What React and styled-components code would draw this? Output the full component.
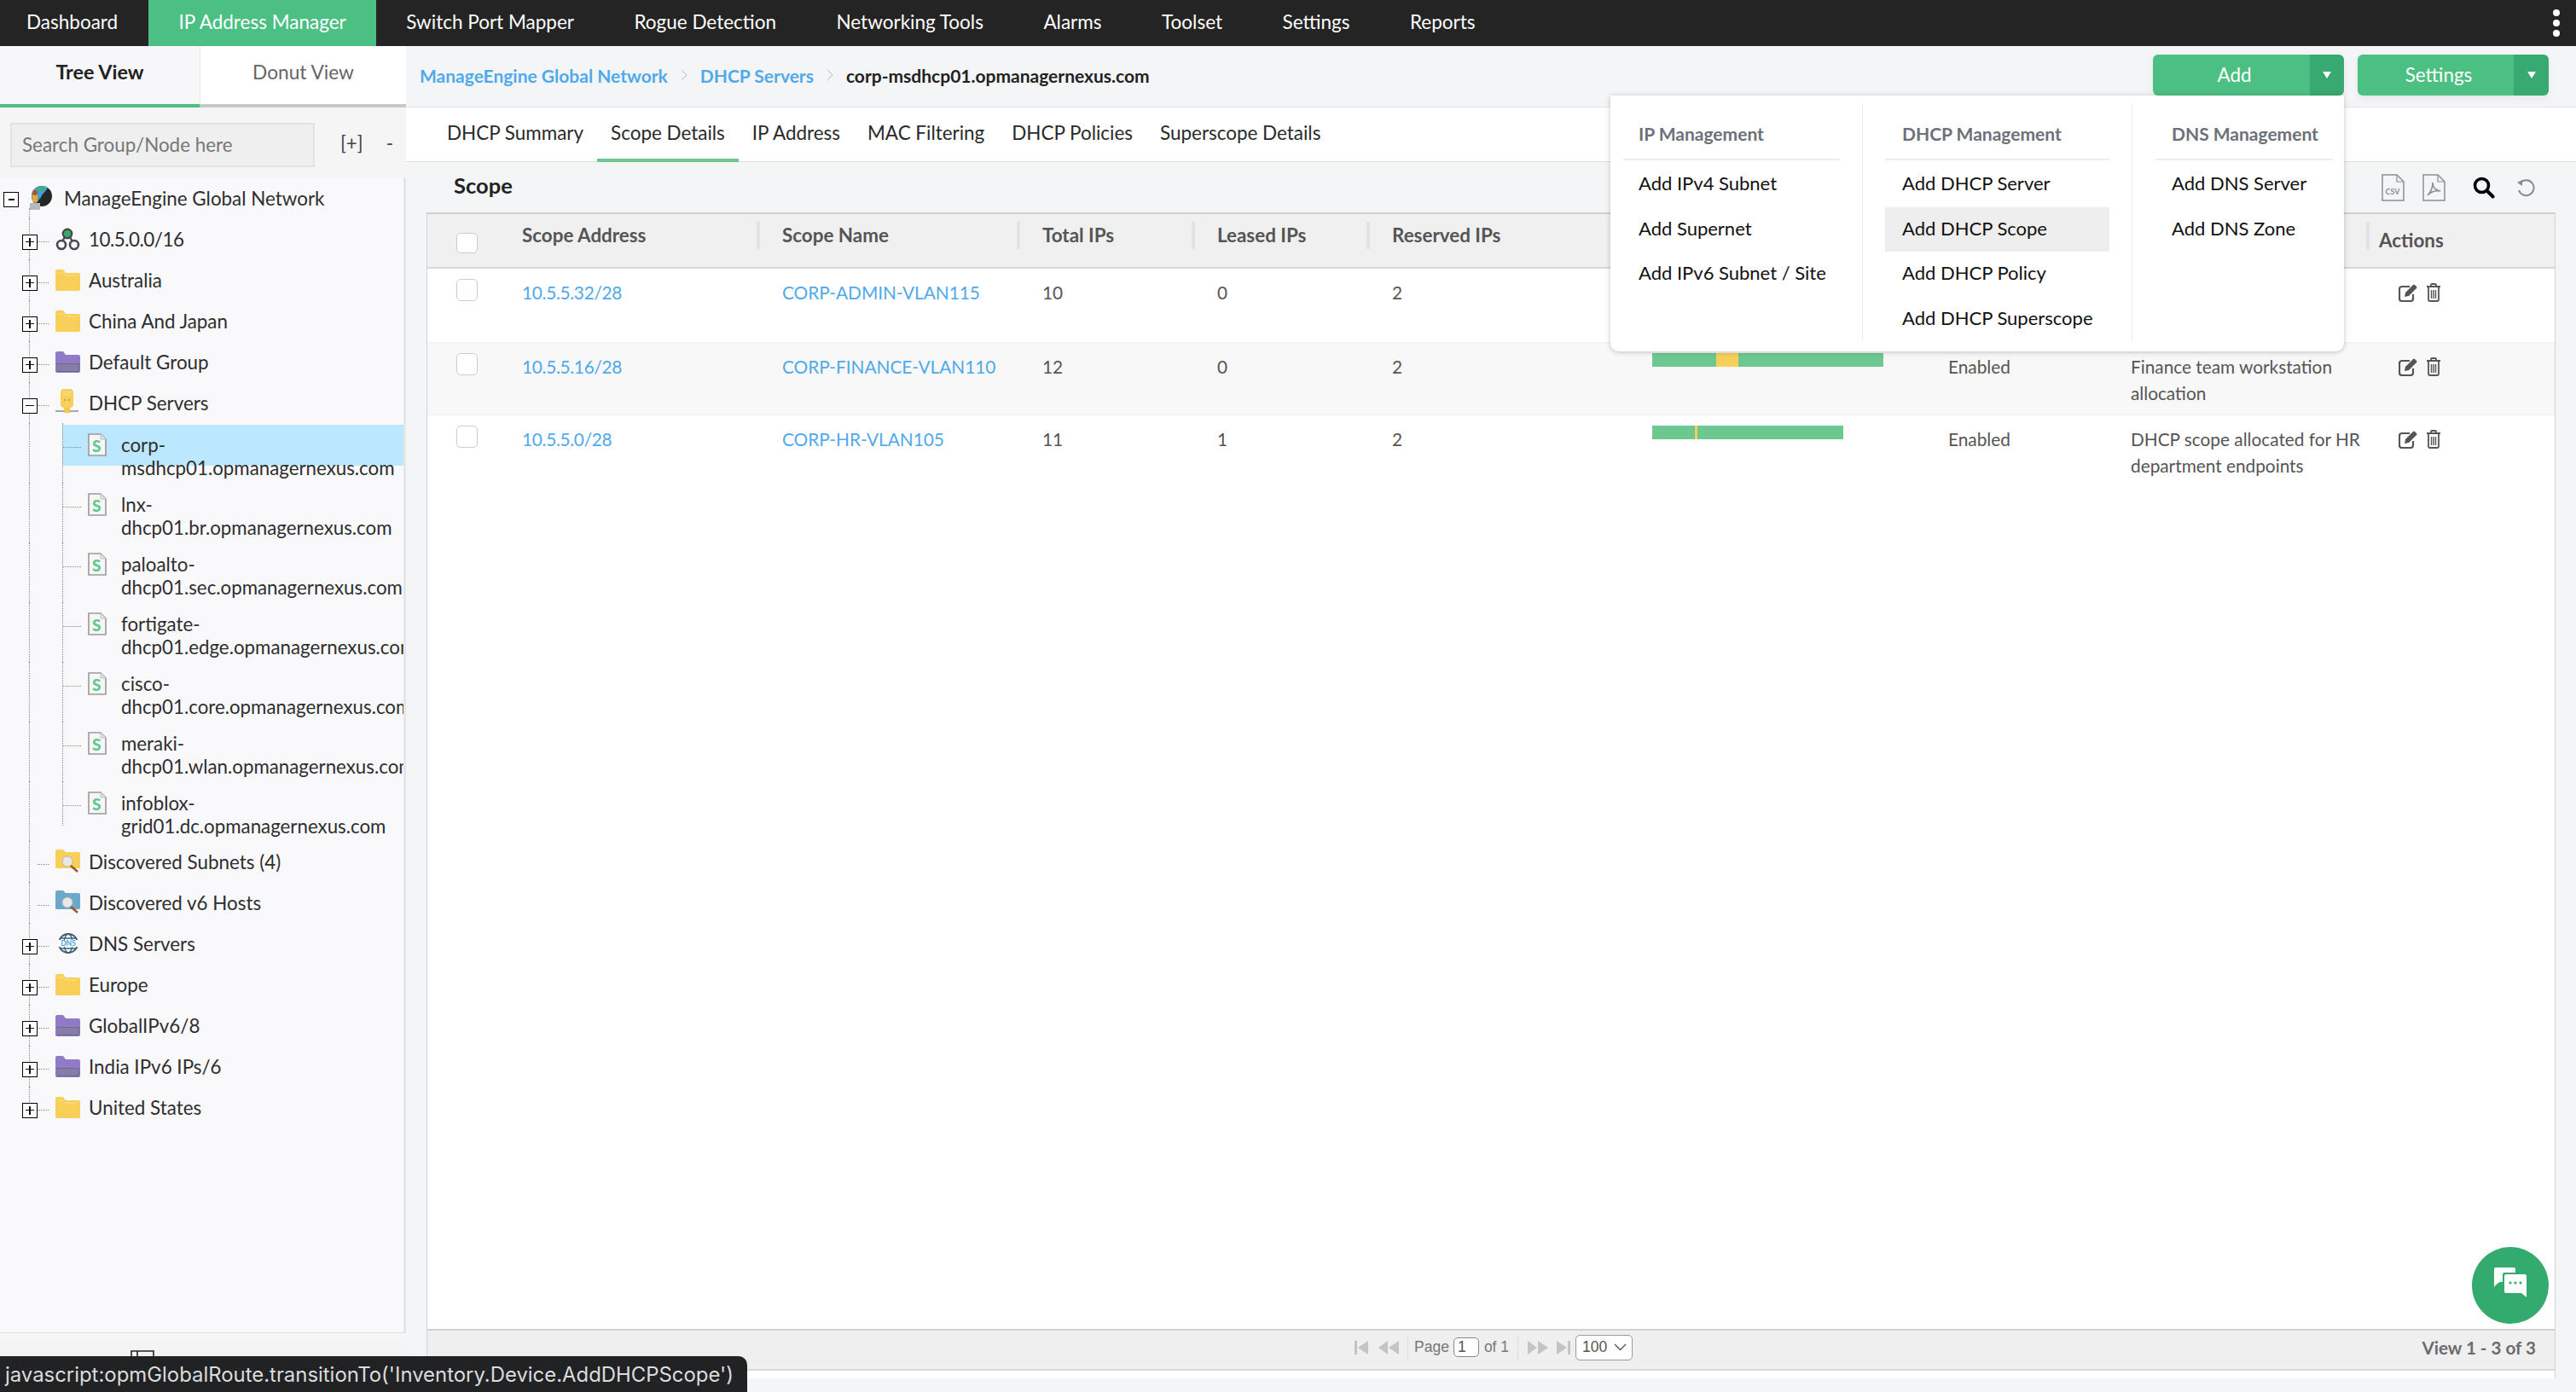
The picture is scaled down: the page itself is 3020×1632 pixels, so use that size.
import React from "react";
import styled, { createGlobalStyle, css } from "styled-components";

const Global = createGlobalStyle`
  html, body { margin: 0; padding: 0; background: #f4f5f7; }
  * { box-sizing: border-box; }
  body { font-family: Lato, "Open Sans", sans-serif; color: #2b2b2b; }
`;

const Page = styled.div`
  position: relative; width: 3020px; height: 1632px; overflow: hidden;
  display: flex; flex-direction: column; background: #f4f5f7;
`;

/* ---------- top nav ---------- */
const TopNav = styled.nav`
  display: flex; align-items: stretch; height: 54px; background: #242424; flex: none;
`;
const NavItem = styled.a`
  display: flex; align-items: center; color: #fff; font-size: 22.5px;
  padding: 0 35.25px 3px; white-space: nowrap;
  background: ${p => (p.$active ? "#4cbf83" : "transparent")};
  &:first-child { padding-left: 31px; padding-right: 36px; }
`;
const Kebab = styled.div`
  margin-left: auto; width: 46px; display: flex; flex-direction: column;
  align-items: center; justify-content: center; gap: 4px;
  & > i { width: 8px; height: 8px; background: #fff; border-radius: 50%; display: block; }
`;

const Body = styled.div`display: flex; flex: 1; min-height: 0;`;

/* ---------- sidebar ---------- */
const Sidebar = styled.aside`
  width: 476px; flex: none; display: flex; flex-direction: column; background: #f5f5f5;
`;
const ViewTabs = styled.div`display: flex; height: 72px; flex: none; background: #fff;`;
const ViewTab = styled.div`
  flex: ${p => (p.$active ? "0 0 235px" : "1")};
  display: flex; align-items: center; justify-content: center; padding-bottom: 8px;
  font-size: ${p => (p.$active ? "23.4px" : "22.7px")};
  font-weight: ${p => (p.$active ? 700 : 400)};
  color: ${p => (p.$active ? "#222" : "#666")};
  background: ${p => (p.$active ? "#f7f7f9" : "#fff")};
  border-bottom: 4px solid ${p => (p.$active ? "#4cbf83" : "#c8c8c8")};
  border-right: ${p => (p.$active ? "1px solid #e4e4e4" : "none")};
`;
const SearchRow = styled.div`
  height: 82px; flex: none; display: flex; align-items: flex-start;
  padding: 18px 0 0 12px; background: #f5f5f5;
`;
const SearchInput = styled.input`
  width: 357px; height: 52px; border: 2px solid #e2e2e2; background: #efefef;
  font: 22.4px Lato, sans-serif; padding: 0 12px 2px; outline: none;
  &::placeholder { color: #777; opacity: 1; }
`;
const TreeBtn = styled.span`
  font-size: 22.4px; color: #444; line-height: 48px; margin-left: ${p => p.$ml}px;
`;
const Tree = styled.div`
  height: 1355px; flex: none; background: #f9f9fc; overflow: hidden;
  border-right: 3px solid #e6e6e9; border-bottom: 1px solid #ddd;
`;
const Row = styled.div`
  position: relative; display: flex; height: 48px; align-items: center; font-size: 22.4px; color: #2e2e2e;
  padding-left: 26px; white-space: nowrap;
  &::before {
    content: ""; position: absolute; left: 34px; top: 0; bottom: ${p => (p.$last ? "22px" : "0")};
    border-left: 1px dotted #888;
  }
`;
const RootRow = styled(Row)`
  padding-left: 4px;
  &::before { top: 36px; bottom: 0; }
`;
const TreeLabel = styled.span`
  letter-spacing: ${p => (p.$tight ? "-0.5px" : "0")};
`;
const Expander = styled.span`
  position: relative; z-index: 1; width: 18px; height: 18px; flex: none; margin-top: 7px;
  border: 1.5px solid #000; background: #fff;
  display: flex; align-items: center; justify-content: center;
  &::before { content: ""; width: 10px; height: 1.5px; background: #111; position: absolute; }
  ${p => !p.$open && css`
    &::after { content: ""; width: 1.5px; height: 10px; background: #111; position: absolute; }
  `}
`;
const RootExpander = styled(Expander)`
  margin-top: 4px;
  &::before { width: 7px; }
`;
const Dash = styled.span`
  flex: none; width: 13px; height: 0; margin-top: 7px; margin-right: 8px;
  border-top: 1px dotted #888;
`;
const NoBox = styled.span`width: 8px; flex: none; margin-left: 10px;`;
const IconSlot = styled.span`
  width: 29px; flex: none; display: flex; align-items: center; justify-content: center; margin-right: 10px;
`;
const RootSlot = styled(IconSlot)`width: 30px; margin-left: 11px; margin-right: 12px;`;
const ChildRow = styled.div`
  position: relative; display: flex; height: 70px; padding: 12px 0 0 74px; font-size: 22.3px; line-height: 27px; color: #2e2e2e;
  ${p => p.$selected && css`
    background: linear-gradient(#bbe7ff, #bbe7ff) no-repeat 73px 2px / 100% 48px;
  `}
  &::before { content: ""; position: absolute; left: 34px; top: 0; bottom: 0; border-left: 1px dotted #888; }
  &::after {
    content: ""; position: absolute; left: 73px; top: 0; bottom: ${p => (p.$last ? "18px" : "0")};
    border-left: 1px dotted #888;
  }
`;
const ChildDash = styled.span`
  flex: none; width: 21px; height: 0; margin-top: 16px; margin-right: 8px; border-top: 1px dotted #888;
`;
const ChildIcon = styled.span`flex: none; width: 22px; margin-right: 17px; display: flex;`;
const ChildText = styled.span`width: 400px; flex: none; padding-right: 67px;`;

const SideFoot = styled.div`
  flex: 1; padding: 20px 0 0 153px; background: linear-gradient(#f6f6f6, #ececec);
  & > svg { display: block; }
`;

/* ---------- main ---------- */
const Main = styled.main`flex: 1; min-width: 0; display: flex; flex-direction: column; background: #f4f5f7;`;
const CrumbBar = styled.div`
  height: 72px; flex: none; display: flex; align-items: center; padding: 0 32px 3px 16px; gap: 15px; font-size: 21px; border-bottom: 1px solid #e6e6e6;
`;
const Crumb = styled.a`
  font-weight: 700; color: ${p => (p.$current ? "#222" : "#4fa9ea")}; white-space: nowrap;
`;
const SplitBtn = styled.div`
  width: 224px; height: 48px; display: flex; border-radius: 6px; overflow: hidden;
  margin-left: ${p => p.$ml}; color: #fff; font-size: 22.4px; box-shadow: 0 4px 10px rgba(0,0,0,.06);
`;
const SplitLabel = styled.span`
  flex: 1; background: #4cbf83; display: flex; align-items: center; justify-content: center; padding: 0 0 2px 7px;
`;
const SplitCaret = styled.span`
  width: ${p => p.$w}px; flex: none; background: #38a970; display: flex; align-items: center; justify-content: center;
  &::before { content: ""; border-left: 5px solid transparent; border-right: 5px solid transparent; border-top: 8px solid #fff; }
`;
const SubTabs = styled.div`
  height: 64px; flex: none; background: #fff; display: flex; padding-left: 32px; border-bottom: 1px solid #dedede;
`;
const SubTab = styled.a`
  display: flex; align-items: center; padding: 0 16px 2px; font-size: 22.45px; color: #2a2a2a; white-space: nowrap;
  height: 64px;
  border-bottom: 4px solid ${p => (p.$active ? "#6cc88f" : "transparent")};
`;
const ScopeBar = styled.div`
  height: 59px; flex: none; display: flex; align-items: center; padding: 0 48px 0 56px;
`;
const ScopeTitle = styled.h2`font-size: 25.5px; font-weight: 700; margin: 0 0 5px; color: #222;`;
const ToolIcons = styled.div`
  margin-left: auto; display: flex; align-items: center; height: 100%;
  & > svg { display: block; }
`;
const ToolGap = styled.span`width: ${p => p.$w}px; flex: none;`;

const TableWrap = styled.section`
  margin: 0 24px 16px 24px; flex: 1; min-height: 0; background: #fff; display: flex; flex-direction: column;
  border-left: 1px solid #d4d4d4; border-right: 1px solid #d4d4d4; border-top: 2px solid #d0d0d0;
`;
const cols = "111px 305px 305px 205px 205px 305px 347px 214px 291px 1fr";
const HeadRow = styled.div`
  display: grid; grid-template-columns: ${cols}; height: 64px; flex: none; background: #f0f0f0; border-bottom: 2px solid #d6d6d6;
`;
const HeadCell = styled.div`
  position: relative; font-size: 22.4px; font-weight: 700; color: #555; padding-top: ${p => (p.$low ? "17px" : "11px")};
  white-space: nowrap;
  &::after {
    content: ""; display: ${p => (p.$sep ? "block" : "none")}; position: absolute; right: 26px; top: 9px;
    width: 4px; height: 32px; background: #e2e2e2;
  }
`;
const ActionsHead = styled(HeadCell)`
  &::before { content: ""; position: absolute; left: -15px; top: 9px; width: 4px; height: 32px; background: #e2e2e2; }
`;
const DataRow = styled.div`
  display: grid; grid-template-columns: ${cols}; height: 86px; flex: none;
  background: ${p => (p.$alt ? "#f8f8f8" : "#fff")};
  border-top: ${p => (p.$alt ? "1px solid #f1f1f1" : "none")};
  border-bottom: ${p => (p.$alt ? "1px solid #f1f1f1" : "none")};
  font-size: 20.8px; line-height: 31px; color: #555;
`;
const Cell = styled.div`padding-top: 12px; padding-right: 12px;`;
const LinkCell = styled(Cell)`
  color: #4fa9ea; white-space: nowrap;
  letter-spacing: ${p => (p.$tight ? "-0.3px" : "0")};
`;
const CheckCell = styled.div`padding: ${p => (p.$head ? "22px" : "12px")} 0 0 34px;`;
const Check = styled.span`
  display: block; width: 25px; height: ${p => p.$h}px; background: #fff; border: 1px solid #ccc; border-radius: 5px;
`;
const Bar = styled.div`
  display: flex; height: 16px; margin-top: 12px; width: ${p => p.$w}px; background: #6cc88f;
`;
const BarSeg = styled.span`
  display: block; margin-left: ${p => p.$at}px; width: ${p => p.$w}px; background: #f6cf58;
`;
const ActionIcons = styled.div`display: flex; gap: 8px; padding: 17px 0 0 23px; & > svg { display: block; }`;
const Filler = styled.div`flex: 1;`;
const Pager = styled.div`
  height: 49px; flex: none; margin-bottom: 9px; background: #efefef; border-top: 2px solid #d2d2d2; border-bottom: 2px solid #d8d8d8;
  display: flex; align-items: center; padding: 0 22px 6px 1086px; font-family: "Liberation Sans", Arial, sans-serif;
  font-size: 17.5px; color: #777;
`;
const PagerIcon = styled.span`display: flex; margin-right: ${p => p.$mr || 0}px; & > svg { display: block; }`;
const PagerSep = styled.span`width: 1px; height: 32px; background: #dedede; margin: 0 ${p => p.$r}px 0 ${p => p.$l}px;`;
const PageInput = styled.span`
  width: 30px; height: 23px; margin: 0 6px 0 5px; background: #fff; border: 1px solid #888; border-radius: 5px;
  display: flex; align-items: center; padding-left: 4px; color: #555;
`;
const PageSelect = styled.span`
  width: 67px; height: 30px; margin-left: 5px; background: #fff; border: 1px solid #999; border-radius: 5px;
  display: flex; align-items: center; justify-content: space-between; padding: 0 6px 0 7px; color: #555;
  & > svg { display: block; }
`;
const ViewCount = styled.span`
  margin-left: auto; font-family: Lato, sans-serif; font-weight: 700; font-size: 20.6px; color: #6b6b70;
`;

/* ---------- dropdown ---------- */
const Menu = styled.div`
  position: absolute; left: 1888px; top: 112px; width: 860px; height: 300px; z-index: 5;
  background: #fff; border-radius: 0 0 10px 10px; box-shadow: 0 1px 6px rgba(0,0,0,.22);
  display: grid; grid-template-columns: 296px 316px 1fr; padding: 11px 0 13px;
`;
const MenuCol = styled.div`
  padding: 0 ${p => p.$pr}px 0 ${p => p.$pl}px;
  border-right: ${p => (p.$div ? "1px solid #ececec" : "none")};
`;
const MenuHead = styled.div`
  height: 65px; display: flex; align-items: center; padding: 4px 0 0 ${p => p.$il || 18}px; font-size: 21px; font-weight: 700; color: #6b7079; border-bottom: 2px solid #eee; margin-bottom: 2px;
`;
const MenuItem = styled.div`
  height: 52.5px; display: flex; align-items: center; padding: 0 0 3px ${p => p.$il || 18}px; font-size: 22px; color: #111; white-space: nowrap;
  background: ${p => (p.$hot ? "#eeeeee" : "transparent")};
`;

const Tip = styled.div`
  position: absolute; left: 0; bottom: 0; height: 42px; width: 876px; z-index: 6; background: #202224;
  border-radius: 0 10px 0 0; color: #dcdcdc; font-family: Inter, Roboto, sans-serif; font-size: 23.9px;
  display: flex; align-items: center; padding-left: 6px; white-space: nowrap;
`;
const Fab = styled.div`
  position: absolute; left: 2898px; top: 1462px; width: 90px; height: 90px; z-index: 4; border-radius: 50%; background: #33ab6f;
  & > svg { display: block; }
`;

/* ---------- icons ---------- */
const Folder = ({ color = "#f8cf58" }) => (
  <svg width="29" height="25" viewBox="0 0 29 25">
    <path d="M0 2q0-2 2-2h7l3 4h15q2 0 2 2v17q0 2-2 2H2q-2 0-2-2z" fill={color} />
    <path d="M2 4h7l2 3h16" stroke="#fff" strokeWidth="1" strokeDasharray="1 1.4" fill="none" opacity=".8" />
  </svg>
);
const PurpleFolder = () => (
  <svg width="29" height="25" viewBox="0 0 29 25">
    <path d="M0 2q0-2 2-2h7l3 4h15q2 0 2 2v17q0 2-2 2H2q-2 0-2-2z" fill="#917ac8" />
    <path d="M1 14h27v9q0 1-1 1H2q-1 0-1-1z" fill="#6f6a84" />
    <path d="M2 15v8M4 15v8M6 15v8M8 15v8M10 15v8M12 15v8M14 15v8M16 15v8M18 15v8M20 15v8M22 15v8M24 15v8M26 15v8" stroke="#a99adf" strokeWidth=".8" />
  </svg>
);
const Globe = () => (
  <svg width="29" height="29" viewBox="0 0 29 29">
    <circle cx="15" cy="12" r="12" fill="#262626" />
    <path d="M15 0a12 12 0 0 0-12 12c0 4 2 7 5 9 2-4 6-6 7-10 2-3 5-5 7-9a12 12 0 0 0-7-2z" fill="#3f9fd0" />
    <path d="M10 2c3-1 7-1 9 1-2 3-6 3-8 2z" fill="#4fb05a" />
    <rect x="4" y="10" width="6" height="9" fill="#e9a93a" />
    <circle cx="7" cy="8" r="3" fill="#a5582a" />
    <rect x="1" y="20" width="12" height="8" fill="#b8b8b8" />
  </svg>
);
const Network = () => (
  <svg width="29" height="27" viewBox="0 0 29 27">
    <circle cx="14" cy="7" r="5.2" fill="#33ab6f" stroke="#4a4a4a" strokeWidth="2.4" />
    <circle cx="7" cy="20" r="5" fill="none" stroke="#4a4a4a" strokeWidth="2.6" />
    <circle cx="22" cy="20" r="5" fill="none" stroke="#4a4a4a" strokeWidth="2.6" />
    <path d="M11 11l-3 5M17 11l3 5" stroke="#4a4a4a" strokeWidth="2.4" />
  </svg>
);
const ServerIcon = () => (
  <svg width="29" height="32" viewBox="0 0 29 32">
    <rect x="6" y="0" width="15" height="22" rx="4" fill="#f8cf58" />
    <path d="M9 4h9M10 7h7" stroke="#fff" strokeDasharray="1 1" opacity=".8" />
    <circle cx="11" cy="13" r=".8" fill="#8a6b1c" /><circle cx="16" cy="13" r=".8" fill="#8a6b1c" />
    <rect x="0" y="25" width="27" height="2" fill="#a8a8a8" />
    <rect x="10" y="22" width="7" height="6" fill="#f3c64a" />
  </svg>
);
const DhcpFile = () => (
  <svg width="22" height="27" viewBox="0 0 22 27">
    <path d="M1 1h14l6 6v19H1z" fill="#f6f6f6" stroke="#9a9a9a" strokeWidth="1.6" />
    <path d="M15 1v6h6" fill="#e4e4e4" stroke="#bdbdbd" strokeWidth="1" />
    <text x="5" y="21.500" fontFamily="Lato, sans-serif" fontSize="19" fontWeight="900" fill="#5fc98d">S</text>
  </svg>
);
const FindFolder = ({ color }) => (
  <svg width="29" height="28" viewBox="0 0 29 28">
    <path d="M0 2q0-2 2-2h7l3 3h15q2 0 2 2v16q0 1-2 1H2q-2 0-2-1z" fill={color} />
    <circle cx="14" cy="14" r="6" fill="#e8e8e8" stroke="#b9b9b9" />
    <path d="M18 19l8 7" stroke="#9a5a2a" strokeWidth="2.6" />
  </svg>
);
const DnsGlobe = () => (
  <svg width="26" height="24" viewBox="0 0 26 24">
    <circle cx="13" cy="12" r="11" fill="#fff" stroke="#3f5f73" strokeWidth="1.800" />
    <ellipse cx="13" cy="12" rx="5" ry="11" fill="none" stroke="#3f5f73" strokeWidth="1.300" />
    <path d="M3 6h20M3 18h20" stroke="#3f5f73" strokeWidth="1.300" />
    <rect x="1" y="8" width="24" height="8" fill="#fff" />
    <text x="13" y="15" textAnchor="middle" fontFamily="Lato, sans-serif" fontSize="8.500" fontWeight="700" fill="#4aa3e0">DNS</text>
  </svg>
);
const DocIcon = ({ children }) => (
  <svg width="27" height="32" viewBox="0 0 27 32">
    <path d="M1 1h17l8 8v22H1z" fill="none" stroke="#8f8f8f" strokeWidth="1.500" />
    <path d="M18 1v8h8" fill="none" stroke="#8f8f8f" strokeWidth="1.200" />
    {children}
  </svg>
);
const EditIcon = () => (
  <svg width="24" height="22" viewBox="0 0 24 22">
    <path d="M17 13v5q0 3-3 3H4q-3 0-3-3V7q0-3 3-3h9" fill="none" stroke="#555" strokeWidth="2.2" />
    <path d="M8 11l9-9q1-1 2 0l2 2q1 1 0 2l-9 9-5 1z" fill="#555" />
  </svg>
);
const TrashIcon = () => (
  <svg width="18" height="22" viewBox="0 0 18 22">
    <path d="M1 4h16M6 4V2q0-1 1-1h4q1 0 1 1v2" fill="none" stroke="#555" strokeWidth="1.8" />
    <path d="M3 5v14q0 2 2 2h8q2 0 2-2V5" fill="none" stroke="#555" strokeWidth="1.8" />
    <path d="M6.500 8v10M9 8v10M11.500 8v10" stroke="#555" strokeWidth="1.4" />
  </svg>
);
const Chevron = () => (
  <svg width="8" height="14" viewBox="0 0 8 14"><path d="M1 1l6 6-6 6" fill="none" stroke="#b5b5b5" strokeWidth="1" /></svg>
);

const Actions = () => (
  <ActionIcons><EditIcon /><TrashIcon /></ActionIcons>
);

const navItems = ["Dashboard", "IP Address Manager", "Switch Port Mapper", "Rogue Detection", "Networking Tools", "Alarms", "Toolset", "Settings", "Reports"];
const subTabs = ["DHCP Summary", "Scope Details", "IP Address", "MAC Filtering", "DHCP Policies", "Superscope Details"];
const children = [
  "corp-msdhcp01.opmanagernexus.com", "lnx-dhcp01.br.opmanagernexus.com", "paloalto-dhcp01.sec.opmanagernexus.com",
  "fortigate-dhcp01.edge.opmanagernexus.com", "cisco-dhcp01.core.opmanagernexus.com", "meraki-dhcp01.wlan.opmanagernexus.com",
  "infoblox-grid01.dc.opmanagernexus.com",
];

const TreeNode = ({ icon, label, open, leaf, last, tight }) => (
  <Row $last={last}>
    {leaf ? <NoBox /> : <Expander $open={open} />}
    <Dash />
    <IconSlot>{icon}</IconSlot>
    <TreeLabel $tight={tight}>{label}</TreeLabel>
  </Row>
);

const rows = [
  { addr: "10.5.5.32/28", name: "CORP-ADMIN-VLAN115", total: 10, leased: 0, reserved: 2 },
  { addr: "10.5.5.16/28", name: "CORP-FINANCE-VLAN110", total: 12, leased: 0, reserved: 2, barW: 271, at: 75, seg: 26, status: "Enabled", desc: "Finance team workstation allocation", alt: true },
  { addr: "10.5.5.0/28", name: "CORP-HR-VLAN105", total: 11, leased: 1, reserved: 2, barW: 224, at: 50, seg: 3, status: "Enabled", desc: "DHCP scope allocated for HR department endpoints" },
];

export default function App() {
  return (
    <Page>
      <Global />
      <TopNav>
        {navItems.map((n, i) => <NavItem key={n} $active={i === 1}>{n}</NavItem>)}
        <Kebab><i /><i /><i /></Kebab>
      </TopNav>
      <Body>
        <Sidebar>
          <ViewTabs>
            <ViewTab $active>Tree View</ViewTab>
            <ViewTab>Donut View</ViewTab>
          </ViewTabs>
          <SearchRow>
            <SearchInput placeholder="Search Group/Node here" />
            <TreeBtn $ml={30}>[+]</TreeBtn>
            <TreeBtn $ml={27}>-</TreeBtn>
          </SearchRow>
          <Tree>
            <RootRow>
              <RootExpander $open />
              <RootSlot><Globe /></RootSlot>
              ManageEngine Global Network
            </RootRow>
            <TreeNode icon={<Network />} label="10.5.0.0/16" tight />
            <TreeNode icon={<Folder />} label="Australia" />
            <TreeNode icon={<Folder />} label="China And Japan" />
            <TreeNode icon={<PurpleFolder />} label="Default Group" />
            <TreeNode icon={<ServerIcon />} label="DHCP Servers" open />
            {children.map((c, i) => (
              <ChildRow key={c} $selected={i === 0} $last={i === children.length - 1}>
                <ChildDash />
                <ChildIcon><DhcpFile /></ChildIcon>
                <ChildText>{c}</ChildText>
              </ChildRow>
            ))}
            <TreeNode leaf icon={<FindFolder color="#f8cf58" />} label="Discovered Subnets (4)" />
            <TreeNode leaf icon={<FindFolder color="#6aa9cc" />} label="Discovered v6 Hosts" />
            <TreeNode icon={<DnsGlobe />} label="DNS Servers" />
            <TreeNode icon={<Folder />} label="Europe" />
            <TreeNode icon={<PurpleFolder />} label="GlobalIPv6/8" />
            <TreeNode icon={<PurpleFolder />} label="India IPv6 IPs/6" />
            <TreeNode icon={<Folder />} label="United States" last />
          </Tree>
          <SideFoot>
            <svg width="28" height="10" viewBox="0 0 28 10"><path d="M1 10V1h26v9M8 1v9" fill="none" stroke="#222" strokeWidth="1.6" /></svg>
          </SideFoot>
        </Sidebar>
        <Main>
          <CrumbBar>
            <Crumb>ManageEngine Global Network</Crumb>
            <Chevron />
            <Crumb>DHCP Servers</Crumb>
            <Chevron />
            <Crumb $current>corp-msdhcp01.opmanagernexus.com</Crumb>
            <SplitBtn $ml="auto"><SplitLabel>Add</SplitLabel><SplitCaret $w={40} /></SplitBtn>
            <SplitBtn $ml="1px"><SplitLabel>Settings</SplitLabel><SplitCaret $w={41} /></SplitBtn>
          </CrumbBar>
          <SubTabs>
            {subTabs.map((t, i) => <SubTab key={t} $active={i === 1}>{t}</SubTab>)}
          </SubTabs>
          <ScopeBar>
            <ScopeTitle>Scope</ScopeTitle>
            <ToolIcons>
              <DocIcon><text x="13" y="24" textAnchor="middle" fontFamily="Lato, sans-serif" fontWeight="700" fontSize="9" fill="#8f8f8f">CSV</text></DocIcon>
              <ToolGap $w={21} />
              <DocIcon><path d="M6 25c4-4 6-10 6-15 0 6 3 9 9 10-6-1-11 1-15 5z" fill="none" stroke="#8f8f8f" strokeWidth="1.6" /></DocIcon>
              <ToolGap $w={32} />
              <svg width="26" height="26" viewBox="0 0 26 26"><circle cx="10.500" cy="10.500" r="8" fill="none" stroke="#000" strokeWidth="3.6" /><path d="M16.500 16.500l7 7" stroke="#000" strokeWidth="4" strokeLinecap="round" /></svg>
              <ToolGap $w={25} />
              <svg width="22" height="22" viewBox="0 0 22 22"><path d="M5 5a9 9 0 1 1-2 9" fill="none" stroke="#8a8a8a" strokeWidth="2" /><path d="M1 5l6-3v7z" fill="#8a8a8a" /></svg>
            </ToolIcons>
          </ScopeBar>
          <TableWrap>
            <HeadRow>
              <CheckCell $head><Check $h={24} /></CheckCell>
              <HeadCell $sep>Scope Address</HeadCell>
              <HeadCell $sep>Scope Name</HeadCell>
              <HeadCell $sep>Total IPs</HeadCell>
              <HeadCell $sep>Leased IPs</HeadCell>
              <HeadCell>Reserved IPs</HeadCell>
              <HeadCell />
              <HeadCell />
              <HeadCell />
              <ActionsHead $low>Actions</ActionsHead>
            </HeadRow>
            {rows.map(r => (
              <DataRow key={r.addr} $alt={r.alt}>
                <CheckCell><Check $h={26} /></CheckCell>
                <LinkCell $tight>{r.addr}</LinkCell>
                <LinkCell>{r.name}</LinkCell>
                <Cell>{r.total}</Cell>
                <Cell>{r.leased}</Cell>
                <Cell>{r.reserved}</Cell>
                <div>{r.barW && <Bar $w={r.barW}><BarSeg $at={r.at} $w={r.seg} /></Bar>}</div>
                <Cell>{r.status}</Cell>
                <Cell>{r.desc}</Cell>
                <Actions />
              </DataRow>
            ))}
            <Filler />
            <Pager>
              <PagerIcon $mr={11}><svg width="17" height="18" viewBox="0 0 17 18"><path d="M1 1h3v16H1zM17 1v16L5 9z" fill="#c4c4c4" /></svg></PagerIcon>
              <PagerIcon><svg width="25" height="18" viewBox="0 0 25 18"><path d="M12 1v16L1 9zM25 1v16L13 9z" fill="#c4c4c4" /></svg></PagerIcon>
              <PagerSep $l={10} $r={7} />
              Page
              <PageInput>1</PageInput>
              of 1
              <PagerSep $l={10} $r={10} />
              <PagerIcon $mr={10}><svg width="25" height="18" viewBox="0 0 25 18"><path d="M1 1v16l11-8zM13 1v16l12-8z" fill="#c4c4c4" /></svg></PagerIcon>
              <PagerIcon><svg width="17" height="18" viewBox="0 0 17 18"><path d="M0 1v16l12-8zM13 1h3v16h-3z" fill="#c4c4c4" /></svg></PagerIcon>
              <PageSelect>100<svg width="15" height="9" viewBox="0 0 15 9"><path d="M1 1l6.500 6.500L14 1" fill="none" stroke="#555" strokeWidth="1.4" /></svg></PageSelect>
              <ViewCount>View 1 - 3 of 3</ViewCount>
            </Pager>
          </TableWrap>
        </Main>
      </Body>

      <Menu>
        <MenuCol $pl={15} $pr={26} $div>
          <MenuHead>IP Management</MenuHead>
          <MenuItem>Add IPv4 Subnet</MenuItem>
          <MenuItem>Add Supernet</MenuItem>
          <MenuItem>Add IPv6 Subnet / Site</MenuItem>
        </MenuCol>
        <MenuCol $pl={26} $pr={26} $div>
          <MenuHead $il={20}>DHCP Management</MenuHead>
          <MenuItem $il={20}>Add DHCP Server</MenuItem>
          <MenuItem $il={20} $hot>Add DHCP Scope</MenuItem>
          <MenuItem $il={20}>Add DHCP Policy</MenuItem>
          <MenuItem $il={20}>Add DHCP Superscope</MenuItem>
        </MenuCol>
        <MenuCol $pl={27} $pr={13}>
          <MenuHead $il={19}>DNS Management</MenuHead>
          <MenuItem $il={19}>Add DNS Server</MenuItem>
          <MenuItem $il={19}>Add DNS Zone</MenuItem>
        </MenuCol>
      </Menu>

      <Fab>
        <svg width="90" height="90" viewBox="0 0 90 90">
          <path d="M28 24h21q2 0 2 2v4H38q-2 0-2 2v9h-3q-3 1-7 6V26q0-2 2-2z" fill="#fff" />
          <path d="M40 32h22q2 0 2 2v25l-6-5H40q-2 0-2-2V34q0-2 2-2z" fill="#fff" />
          <circle cx="45" cy="42" r="1.6" fill="#33ab6f" /><circle cx="51" cy="42" r="1.6" fill="#33ab6f" /><circle cx="57" cy="42" r="1.6" fill="#33ab6f" />
        </svg>
      </Fab>
      <Tip>javascript:opmGlobalRoute.transitionTo('Inventory.Device.AddDHCPScope')</Tip>
    </Page>
  );
}
